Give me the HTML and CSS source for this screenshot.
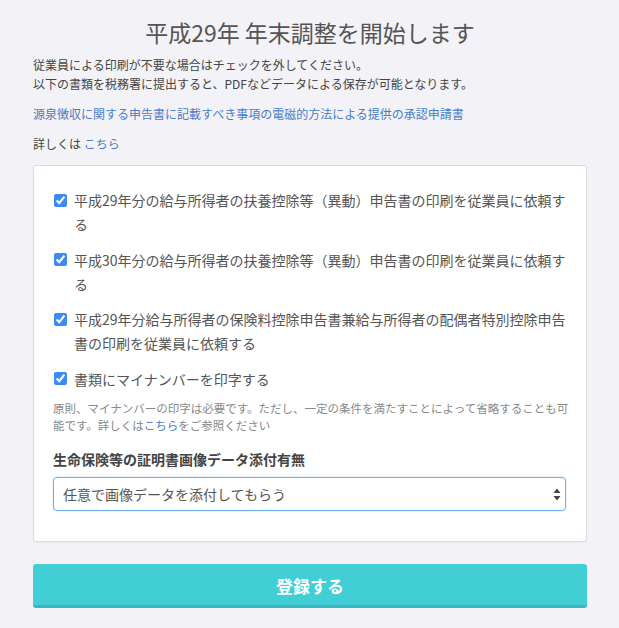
FILE: index.html
```html
<!DOCTYPE html>
<html lang="ja">
<head>
<meta charset="utf-8">
<title>年末調整</title>
<link rel="stylesheet" href="styles.css">
</head>
<body>
<main class="page">
  <h1 class="title">平成29年 年末調整を開始します</h1>
  <p class="intro">従業員による印刷が不要な場合はチェックを外してください。<br>以下の書類を税務署に提出すると、PDFなどデータによる保存が可能となります。</p>
  <p class="para"><a class="link" href="#">源泉徴収に関する申告書に記載すべき事項の電磁的方法による提供の承認申請書</a></p>
  <p class="para">詳しくは <a class="link" href="#">こちら</a></p>

  <section class="card">
    <label class="check">
      <input type="checkbox" checked>
      <span>平成29年分の給与所得者の扶養控除等（異動）申告書の印刷を従業員に依頼する</span>
    </label>
    <label class="check">
      <input type="checkbox" checked>
      <span>平成30年分の給与所得者の扶養控除等（異動）申告書の印刷を従業員に依頼する</span>
    </label>
    <label class="check">
      <input type="checkbox" checked>
      <span>平成29年分給与所得者の保険料控除申告書兼給与所得者の配偶者特別控除申告書の印刷を従業員に依頼する</span>
    </label>
    <label class="check">
      <input type="checkbox" checked>
      <span>書類にマイナンバーを印字する</span>
    </label>
    <p class="note">原則、マイナンバーの印字は必要です。ただし、一定の条件を満たすことによって省略することも可能です。詳しくは<a class="link" href="#">こちら</a>をご参照ください</p>

    <div class="field">
      <div class="field-label">生命保険等の証明書画像データ添付有無</div>
      <div class="select-wrap">
        <select class="select">
          <option>任意で画像データを添付してもらう</option>
        </select>
        <svg class="select-arrow" width="8" height="13" viewBox="0 0 8 13"><path d="M4 0.5 L7.5 5 H0.5 Z M4 12.5 L7.5 8 H0.5 Z" fill="#444"/></svg>
      </div>
    </div>
  </section>

  <button class="submit" type="button">登録する</button>
</main>
</body>
</html>
```

FILE: styles.css
```css
* { box-sizing: border-box; }

html, body {
  margin: 0;
  padding: 0;
  background: #f3f3f7;
}

body {
  font-family: "Noto Sans CJK JP", "Noto Sans", sans-serif;
  color: #444;
}

.page {
  padding: 16px 32px 20px 33px;
}

.title {
  margin: 0;
  font-size: 23px;
  line-height: 32px;
  font-weight: 400;
  color: #555;
  text-align: center;
}

.intro {
  margin: 7px 0 0;
  font-size: 12px;
  line-height: 19px;
  color: #444;
}

.para {
  margin: 11px 0 0;
  font-size: 12px;
  line-height: 19px;
  color: #444;
}

.link {
  color: #4a7bc6;
  text-decoration: none;
}

.card {
  margin-top: 12px;
  background: #fff;
  border: 1px solid #dcdce0;
  border-radius: 3px;
  box-shadow: 0 1px 1px rgba(0, 0, 0, 0.04);
  padding: 22px 20px 30px 19px;
  display: flex;
  flex-direction: column;
}

.check {
  display: flex;
  align-items: flex-start;
  gap: 7px;
  font-size: 14px;
  line-height: 24px;
  color: #555;
}

.check + .check {
  margin-top: 11.5px;
}

.check input {
  margin: 5.5px 0 0 1px;
  width: 13px;
  height: 13px;
  flex: none;
  accent-color: #3d8bf2;
}

.note {
  margin: 9.5px -12px 0 0;
  font-size: 11.5px;
  line-height: 17px;
  color: #888;
}

.field {
  margin-top: 14.5px;
  display: flex;
  flex-direction: column;
  gap: 8px;
}

.field-label {
  font-size: 14px;
  line-height: 20px;
  font-weight: 700;
  color: #444;
}

.select-wrap {
  position: relative;
}

.select {
  -webkit-appearance: none;
  appearance: none;
  width: 100%;
  height: 34px;
  margin: 0;
  padding: 0 24px 0 9px;
  border: 1px solid #6fb0ee;
  border-radius: 4px;
  background: #fff;
  font-family: inherit;
  font-size: 14px;
  color: #555;
  box-shadow: 0 0 0 1px rgba(111, 176, 238, 0.15);
}

.select-arrow {
  position: absolute;
  right: 5px;
  top: 11px;
  pointer-events: none;
}

.submit {
  display: block;
  width: 100%;
  margin-top: 22px;
  height: 44px;
  border: none;
  border-bottom: 3px solid #38b7be;
  border-radius: 3px;
  background: #42ced5;
  color: #fff;
  font-family: inherit;
  font-size: 17px;
  font-weight: 700;
  padding: 2px 0 0;
}
```
